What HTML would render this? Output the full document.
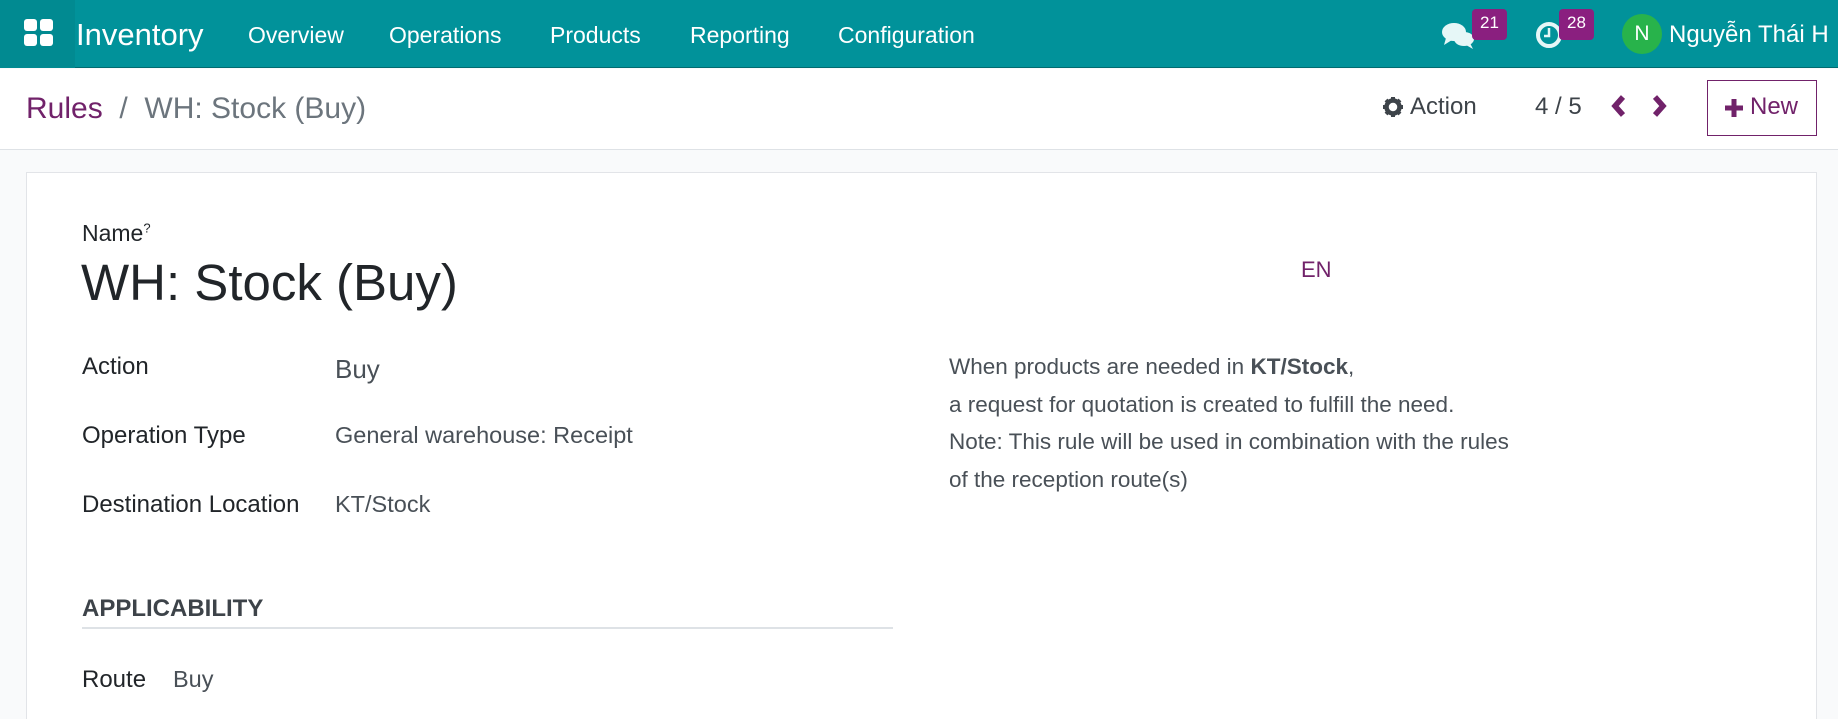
<!DOCTYPE html>
<html><head><meta charset="utf-8"><style>
*{margin:0;padding:0;box-sizing:border-box}
html,body{width:1838px;height:719px;overflow:hidden}
body{background:#f9fafb;font-family:"Liberation Sans",sans-serif;position:relative;color:#212529}
.nav{position:absolute;left:0;top:0;width:1838px;height:68px;background:#01929a;border-bottom:1px solid #016b70}
.apps{position:absolute;left:0;top:0;width:75px;height:68px;background:#018a91}
.nav .t{position:absolute;color:#fff;white-space:nowrap}
.badge{position:absolute;background:#8a1f7f;color:#fff;font-size:17px;border-radius:4px;text-align:center;line-height:28px;height:31px}
.hdr{position:absolute;left:0;top:69px;width:1838px;height:81px;background:#fff;border-bottom:1px solid #dee2e6}
.card{position:absolute;left:26px;top:172px;width:1791px;height:547px;background:#fff;border:1px solid #e2e4e8;border-bottom:none}
.a{position:absolute;white-space:nowrap}
.lbl{font-size:24px;color:#212529}
.val{font-size:23.5px;color:#495057}
</style></head><body>
<div class="nav">
 <div class="apps"><svg style="position:absolute;left:24px;top:19px" width="30" height="28" viewBox="0 0 30 28"><rect x="0" y="0" width="13" height="12" rx="3" fill="#fff"/><rect x="16" y="0" width="13" height="12" rx="3" fill="#fff"/><rect x="0" y="15" width="13" height="12" rx="3" fill="#fff"/><rect x="16" y="15" width="13" height="12" rx="3" fill="#fff"/></svg></div>
 <div class="t" style="left:76px;top:17px;font-size:31px">Inventory</div>
 <div class="t" style="left:248px;top:22px;font-size:23px">Overview</div>
 <div class="t" style="left:389px;top:22px;font-size:23px">Operations</div>
 <div class="t" style="left:550px;top:22px;font-size:23px">Products</div>
 <div class="t" style="left:690px;top:22px;font-size:23px">Reporting</div>
 <div class="t" style="left:838px;top:22px;font-size:23px">Configuration</div>
 <svg style="position:absolute;left:1442px;top:22px" width="34" height="28" viewBox="0 0 34 28"><ellipse cx="12" cy="10" rx="12" ry="9" fill="#e6f7f7"/><path d="M4 16 L2 23 L10 18Z" fill="#e6f7f7"/><ellipse cx="22" cy="17" rx="10" ry="7" fill="#e6f7f7"/><path d="M28 21 L31 27 L24 23Z" fill="#e6f7f7"/></svg>
 <div class="badge" style="left:1472px;top:9px;width:35px">21</div>
 <svg style="position:absolute;left:1535px;top:20px" width="30" height="30" viewBox="0 0 30 30"><circle cx="14" cy="15" r="11" fill="none" stroke="#e6f7f7" stroke-width="4"/><path d="M14 8 V16 H9" fill="none" stroke="#e6f7f7" stroke-width="2.5"/></svg>
 <div class="badge" style="left:1559px;top:9px;width:35px">28</div>
 <div style="position:absolute;left:1622px;top:14px;width:40px;height:40px;border-radius:50%;background:#28b34b;color:#fff;font-size:21px;text-align:center;line-height:40px">N</div>
 <div class="t" style="left:1669px;top:21px;font-size:24px">Nguyễn Thái H</div>
</div>
<div class="hdr">
 <div class="a" style="left:26px;top:23px;font-size:30px;color:#71226a">Rules <span style="color:#6c757d">&nbsp;/&nbsp; WH: Stock (Buy)</span></div>
 <svg style="position:absolute;left:1383px;top:28px" width="20" height="20" viewBox="0 0 20 20"><circle cx="10" cy="10" r="6.5" fill="none" stroke="#3d4349" stroke-width="4.5"/><g stroke="#3d4349" stroke-width="4"><path d="M10 0V4M10 16V20M0 10H4M16 10H20M3 3L5.5 5.5M14.5 14.5L17 17M17 3L14.5 5.5M3 17L5.5 14.5"/></g></svg>
 <div class="a" style="left:1410px;top:24px;font-size:24px;color:#3d4349">Action</div>
 <div class="a" style="left:1535px;top:24px;font-size:24px;color:#3d4349">4 / 5</div>
 <svg style="position:absolute;left:1609px;top:25px" width="60" height="24" viewBox="0 0 60 24"><path d="M14 3 L6 12 L14 21" fill="none" stroke="#71226a" stroke-width="5.5"/><path d="M46 3 L54 12 L46 21" fill="none" stroke="#71226a" stroke-width="5.5"/></svg>
 <div style="position:absolute;left:1707px;top:11px;width:110px;height:56px;border:1px solid #71226a"></div>
 <svg style="position:absolute;left:1724px;top:29px" width="20" height="20" viewBox="0 0 20 20"><path d="M10 1V19M1 10H19" stroke="#71226a" stroke-width="5"/></svg>
 <div class="a" style="left:1750px;top:24px;font-size:24px;color:#71226a">New</div>
</div>
<div class="card"></div>
<div class="a" style="left:82px;top:220px;font-size:23px">Name<sup style="font-size:13px">?</sup></div>
<div class="a" style="left:81px;top:253px;font-size:51px;color:#212529">WH: Stock (Buy)</div>
<div class="a" style="left:1301px;top:257px;font-size:22px;color:#71226a">EN</div>
<div class="a lbl" style="left:82px;top:353px">Action</div>
<div class="a val" style="left:335px;top:354px;font-size:26px">Buy</div>
<div class="a lbl" style="left:82px;top:422px">Operation Type</div>
<div class="a val" style="left:335px;top:422px">General warehouse: Receipt</div>
<div class="a lbl" style="left:82px;top:491px">Destination Location</div>
<div class="a val" style="left:335px;top:491px">KT/Stock</div>
<div class="a" style="left:949px;top:348px;font-size:22.5px;line-height:37.5px;color:#495057">When products are needed in <b>KT/Stock</b>,<br>a request for quotation is created to fulfill the need.<br>Note: This rule will be used in combination with the rules<br>of the reception route(s)</div>
<div class="a" style="left:82px;top:595px;font-size:24px;font-weight:bold;color:#3d4349">APPLICABILITY</div>
<div style="position:absolute;left:82px;top:627px;width:811px;height:2px;background:#dee2e6"></div>
<div class="a lbl" style="left:82px;top:666px">Route</div>
<div class="a val" style="left:173px;top:666px">Buy</div>
</body></html>
